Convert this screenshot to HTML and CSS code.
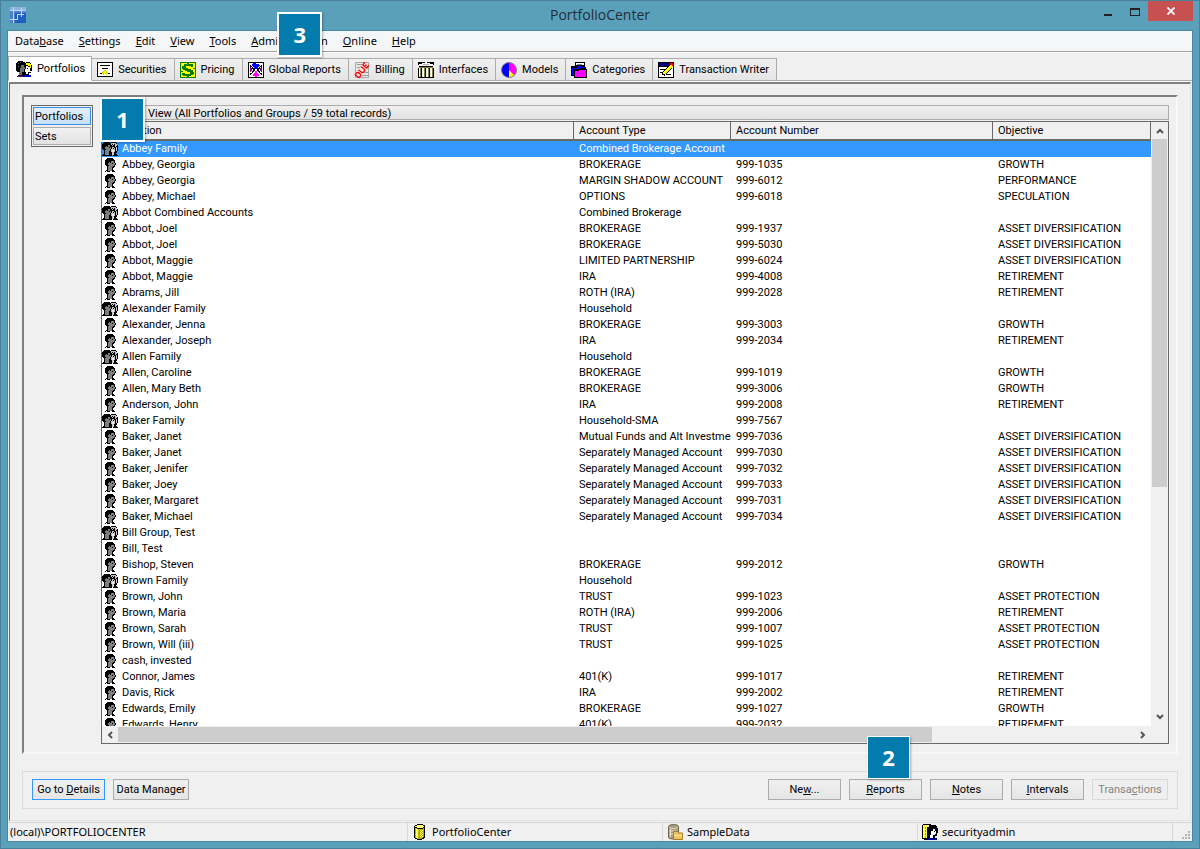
FILE: index.html
```html
<!DOCTYPE html>
<html lang="en">
<head>
<meta charset="utf-8">
<title>PortfolioCenter</title>
<link rel="stylesheet" href="styles.css">
</head>
<body>
<svg class="sprite" aria-hidden="true">
  <symbol id="person" viewBox="0 0 16 16">
    <path fill="#000" d="M5 1h6v1h1v1h1v3h1v2h-1v2h-1v1h-1v2h1v1h1v1H3v-1h1v-1h1V9H4V8H3V3h1V2h1z"/>
    <path fill="#808080" d="M9 4h3v2h1v2h-1v1h-1v1h-1v4H6V9h1V8H6V6h1V5h1v1h1z"/>
    <path fill="#000" d="M10 6h1v1h-1z"/>
    <path fill="#fff" d="M4 14h1v1H4zM8 14h2v1H8z"/>
  </symbol>
  <symbol id="group" viewBox="0 0 16 16">
    <path fill="#000" d="M2 1h6v1h1V1h5v1h1v2h1v6h-1v2h-1v1h1v1h1v1h-5v-1h-1v1H0v-1h1v-1h1V9H1V8H0V3h1V2h1z"/>
    <path fill="#808080" d="M6 4h2v2h1v2H8v2H7v4H3V9h1V8H3V6h1V5h1v1h1z"/>
    <path fill="#000" d="M7 6h1v1H7z"/>
    <path fill="#c8c8c8" d="M9 2h5v1h1v7h-1V6h-1V4h-2v1h-1V4H9zM10 6h2v1h1v4h-1v3h-2v-3H9V8h1z"/>
    <path fill="#000" d="M11 7h1v1h-1zM10 3h1v1h-1zM12 3h1v1h-1zM14 5h1v1h-1z"/>
    <path fill="#e8e8e8" d="M10 9h2v2h-2z"/>
  </symbol>
  <symbol id="cylinder" viewBox="0 0 12 16">
    <path fill="#000" d="M3 0h6v1h2v13h-1v1H8v1H3v-1H1v-1H0V2h1V1h2z"/>
    <path fill="#ffff80" d="M3 1h6v1h1v1H9v1H3V3H1V2h2z"/>
    <path fill="#b8b000" d="M1 4h2v1h6V4h1v9H9v1H8v1H3v-1H1z"/>
    <path fill="#ffff60" d="M2 5h2v9H2z"/>
    <path fill="#ffff60" d="M6 6h1v1H6zM8 6h1v1H8zM7 7h1v1H7zM6 8h1v1H6zM8 8h1v1H8zM7 9h1v1H7zM6 10h1v1H6zM8 10h1v1H8zM7 11h1v1H7zM6 12h1v1H6zM8 12h1v1H8z"/>
  </symbol>
</svg>

<div class="window">
  <header class="titlebar">
    <svg class="app-logo" viewBox="0 0 16 16" shape-rendering="crispEdges">
      <path fill="#8fb3dc" d="M0 0h16v16H0z"/><path fill="#4a80cc" d="M0 4h16v12H0z"/><path fill="#1f5fc0" d="M5 6h11v10H5z"/>
      <path fill="none" stroke="#c3d8f0" d="M0 3.500h16M3.500 0v16M0 12.500h8M7.500 13V7.500h6M11.500 1v9"/>
    </svg>
    <h1 class="title">PortfolioCenter</h1>
    <div class="controls">
      <button class="ctl" aria-label="Minimize"><svg width="10" height="12" shape-rendering="crispEdges"><path fill="#222" d="M1 9h8v2H1z"/></svg></button>
      <button class="ctl" aria-label="Maximize"><svg width="10" height="12" shape-rendering="crispEdges"><path fill="#222" fill-rule="evenodd" d="M0 3h10v8H0zM1 5v5h8V5z"/></svg></button>
      <button class="ctl close" aria-label="Close"><svg width="8" height="8" viewBox="0 0 8 7"><path stroke="#fff" stroke-width="1.800" d="M.5 0l7 7M7.500 0l-7 7"/></svg></button>
    </div>
  </header>

  <div class="client">
    <nav class="menubar">
      <button>Data<u>b</u>ase</button><button><u>S</u>ettings</button><button><u>E</u>dit</button><button><u>V</u>iew</button><button><u>T</u>ools</button>
      <span class="anchor"><button><u>A</u>dministration</button><b class="callout c3">3</b></span>
      <button><u>O</u>nline</button><button><u>H</u>elp</button>
    </nav>

    <div class="tabs" role="tablist">
      <button class="tab active" role="tab" aria-selected="true"><svg viewBox="0 0 16 16" shape-rendering="crispEdges">
        <path d="M2 0h5v1h2v1h1V1h4v1h1v2h1v6h-1v2h-2v2h2v2H1v-1h1v-1h1v-3H1v-1H0V2h1V1h1z"/><path fill="#707070" d="M5 4h3v2h1v2H8v3H6v3H3v-3h1V7h1zM2 2h1v1H2zM4 1h1v1H4zM2 5h1v1H2z"/>
        <path fill="#ffff00" d="M10 2h4v1h1v4h-1V5h-2V4h-2z"/><path fill="#fff" d="M10 5h2v1h2v4h1v1h-3v2h-2v-2H9V8h1z"/><path d="M11 7h1v1h-1z"/><path fill="#800080" d="M1 15h6v1H1z"/><path fill="#0000c0" d="M8 14h7v2H8z"/></svg>Portfolios</button>
      <button class="tab" role="tab"><svg viewBox="0 0 16 16" shape-rendering="crispEdges"><path d="M0 0h16v15H0z"/><path fill="#fff" d="M1 1h14v13H1z"/><path d="M3 3h10v1H3zM5 6h6v1H5zM3 11h3v1H3zM10 11h3v1h-3z"/><path fill="#d8d800" d="M7 8h2v1h1v1h1v2h-1v1H9v-1H7v1H6v-1H5v-2h1V9h1z"/><path fill="#ff0" d="M7 9h2v3H7z"/></svg>Securities</button>
      <button class="tab" role="tab"><svg viewBox="0 0 16 16" shape-rendering="crispEdges"><path fill="#008000" d="M0 0h16v16H0z"/><path fill="#ff0" d="M1 1h14v14H1z"/><path fill="#008000" d="M4 2h3V1h2v1h4v3h-2V4H6v2h2v1h3v1h2v2h1v2h-1v1h-2v1H9v1H7v-1H3v-1H2v-2h3v1h5v-2H7V9H5V8H3V7H2V4h2zM1 9h2v1H1zM13 6h2v1h-2z"/></svg>Pricing</button>
      <button class="tab" role="tab"><svg viewBox="0 0 16 16" shape-rendering="crispEdges"><path d="M0 0h16v16H0z"/><path fill="#fff" d="M1 1h14v14H1z"/><path fill="#00f" d="M5 1h3v1h3v1h1v1h-1v1h-1v2H6V5H5V4H4V2h1z"/><path fill="#f0f" d="M7 9h2v2h1v1h1v2H9v1H7v-1H5v-2h1v-1h1z"/><path d="M2 3h1v1h1v1h1v1h1v1h1v2H6v1H5v1H4v1H3v1H2v-2h2V9h1V7H4V5H2zM14 3h-1v1h-1v1h-1v1h-1v1H9v2h1v1h1v1h1v1h1v1h1v-2h-2V9h-1V7h1V5h2z"/><path fill="#800080" d="M2 5h1v1h1v3H3v1H2zM14 5h-1v1h-1v3h1v1h1z"/></svg>Global Reports</button>
      <button class="tab" role="tab"><svg viewBox="0 0 16 16"><path fill="#e8e8e8" stroke="#aaa" d="M1.500 .5h13v15h-13z"/><path stroke="#999" d="M3 2.500h5M10 10.500h4M8 13.500h6M3 5.500h3"/><g fill="none" stroke="#f00" stroke-width="1.300" transform="rotate(-52 8 8)"><path d="M0 5.500v5h2c2.500 0 2.500-5 0-5zM6 5v4c0 2 4 2 4 0V5M16 5.500h-3.500v5H16M12.500 8H15"/></g></svg>Billing</button>
      <button class="tab" role="tab"><svg viewBox="0 0 16 16" shape-rendering="crispEdges"><path d="M0 0h16v3H0zM1 4h14v1H1zM0 6h4v9H0zM5 6h3v9H5zM9 6h3v9H9zM13 6h3v9h-3zM0 15h16v1H0z"/><path fill="#fff" d="M7 0h2v1h3v1h3v1H1V2h3V1h3zM1 6h1v9H1zM5 6h1v9H5zM9 6h1v9H9zM13 6h1v9h-1z"/><path fill="#b0b0b0" d="M5 2h6v1H5z"/><path fill="#808040" d="M2 6h1v9H2zM6 6h1v9H6zM10 6h1v9h-1zM14 6h1v9h-1zM1 5h14v1H1z"/></svg>Interfaces</button>
      <button class="tab" role="tab"><svg viewBox="0 0 16 16"><circle cx="8" cy="8" r="7.500" fill="#f0f"/><path fill="#00f" d="M8 .5a7.500 7.500 0 0 0 0 15z"/><path fill="#ff0" d="M8 8l5.300 5.300A7.500 7.500 0 0 1 8 15.500z"/><circle cx="8" cy="8" r="7.500" fill="none" stroke="#808080"/></svg>Models</button>
      <button class="tab" role="tab"><svg viewBox="0 0 16 16" shape-rendering="crispEdges"><path d="M4 0h9l1 1v4h1v2h1v9H3v-2H0V4h4z"/><path fill="#fff" d="M5 1h8v2H5z"/><path fill="#888" d="M6 2h5v1H6z"/><path fill="#00f" d="M1 6h5V5h1V4h3v1h4v1H9v1H3v6H1z"/><path fill="#f0f" d="M4 9h4V8h7v7H4z"/></svg>Categories</button>
      <button class="tab" role="tab"><svg viewBox="0 0 16 16" shape-rendering="crispEdges"><path d="M0 0h16v16H0z"/><path fill="#fff" d="M1 5h14v10H1z"/><path fill="#000080" d="M1 1h14v3H1z"/><path d="M2 7h5v1H2zM2 10h3v1H2zM8 12h5v1H8z"/><path stroke="#000" stroke-width="4" d="M5 13L14 3"/><path stroke="#ff0" stroke-width="3" d="M6 12L14 3"/><path fill="#f00" d="M12 1h3v3h-1V3h-2z"/></svg>Transaction Writer</button>
    </div>

    <main class="page">
      <section class="well">
        <nav class="side"><button class="on">Portfolios</button><button>Sets</button></nav>
        <div class="browser">
          <b class="callout c1">1</b>
          <h2 class="view-title">View (All Portfolios and Groups / 59 total records)</h2>
          <div class="list">
            <div class="rows">
              <table>
                <colgroup><col><col class="w-type"><col class="w-num"><col class="w-obj"></colgroup>
                <thead><tr><th>Description</th><th>Account Type</th><th>Account Number</th><th>Objective</th></tr></thead>
                <tbody>
<tr class="sel"><td><svg><use href="#group"/></svg>Abbey Family</td><td>Combined Brokerage Account</td><td></td><td></td></tr>
<tr><td><svg><use href="#person"/></svg>Abbey, Georgia</td><td>BROKERAGE</td><td>999-1035</td><td>GROWTH</td></tr>
<tr><td><svg><use href="#person"/></svg>Abbey, Georgia</td><td>MARGIN SHADOW ACCOUNT</td><td>999-6012</td><td>PERFORMANCE</td></tr>
<tr><td><svg><use href="#person"/></svg>Abbey, Michael</td><td>OPTIONS</td><td>999-6018</td><td>SPECULATION</td></tr>
<tr><td><svg><use href="#group"/></svg>Abbot Combined Accounts</td><td>Combined Brokerage</td><td></td><td></td></tr>
<tr><td><svg><use href="#person"/></svg>Abbot, Joel</td><td>BROKERAGE</td><td>999-1937</td><td>ASSET DIVERSIFICATION</td></tr>
<tr><td><svg><use href="#person"/></svg>Abbot, Joel</td><td>BROKERAGE</td><td>999-5030</td><td>ASSET DIVERSIFICATION</td></tr>
<tr><td><svg><use href="#person"/></svg>Abbot, Maggie</td><td>LIMITED PARTNERSHIP</td><td>999-6024</td><td>ASSET DIVERSIFICATION</td></tr>
<tr><td><svg><use href="#person"/></svg>Abbot, Maggie</td><td>IRA</td><td>999-4008</td><td>RETIREMENT</td></tr>
<tr><td><svg><use href="#person"/></svg>Abrams, Jill</td><td>ROTH (IRA)</td><td>999-2028</td><td>RETIREMENT</td></tr>
<tr><td><svg><use href="#group"/></svg>Alexander Family</td><td>Household</td><td></td><td></td></tr>
<tr><td><svg><use href="#person"/></svg>Alexander, Jenna</td><td>BROKERAGE</td><td>999-3003</td><td>GROWTH</td></tr>
<tr><td><svg><use href="#person"/></svg>Alexander, Joseph</td><td>IRA</td><td>999-2034</td><td>RETIREMENT</td></tr>
<tr><td><svg><use href="#group"/></svg>Allen Family</td><td>Household</td><td></td><td></td></tr>
<tr><td><svg><use href="#person"/></svg>Allen, Caroline</td><td>BROKERAGE</td><td>999-1019</td><td>GROWTH</td></tr>
<tr><td><svg><use href="#person"/></svg>Allen, Mary Beth</td><td>BROKERAGE</td><td>999-3006</td><td>GROWTH</td></tr>
<tr><td><svg><use href="#person"/></svg>Anderson, John</td><td>IRA</td><td>999-2008</td><td>RETIREMENT</td></tr>
<tr><td><svg><use href="#group"/></svg>Baker Family</td><td>Household-SMA</td><td>999-7567</td><td></td></tr>
<tr><td><svg><use href="#person"/></svg>Baker, Janet</td><td>Mutual Funds and Alt Investme</td><td>999-7036</td><td>ASSET DIVERSIFICATION</td></tr>
<tr><td><svg><use href="#person"/></svg>Baker, Janet</td><td>Separately Managed Account</td><td>999-7030</td><td>ASSET DIVERSIFICATION</td></tr>
<tr><td><svg><use href="#person"/></svg>Baker, Jenifer</td><td>Separately Managed Account</td><td>999-7032</td><td>ASSET DIVERSIFICATION</td></tr>
<tr><td><svg><use href="#person"/></svg>Baker, Joey</td><td>Separately Managed Account</td><td>999-7033</td><td>ASSET DIVERSIFICATION</td></tr>
<tr><td><svg><use href="#person"/></svg>Baker, Margaret</td><td>Separately Managed Account</td><td>999-7031</td><td>ASSET DIVERSIFICATION</td></tr>
<tr><td><svg><use href="#person"/></svg>Baker, Michael</td><td>Separately Managed Account</td><td>999-7034</td><td>ASSET DIVERSIFICATION</td></tr>
<tr><td><svg><use href="#group"/></svg>Bill Group, Test</td><td></td><td></td><td></td></tr>
<tr><td><svg><use href="#person"/></svg>Bill, Test</td><td></td><td></td><td></td></tr>
<tr><td><svg><use href="#person"/></svg>Bishop, Steven</td><td>BROKERAGE</td><td>999-2012</td><td>GROWTH</td></tr>
<tr><td><svg><use href="#group"/></svg>Brown Family</td><td>Household</td><td></td><td></td></tr>
<tr><td><svg><use href="#person"/></svg>Brown, John</td><td>TRUST</td><td>999-1023</td><td>ASSET PROTECTION</td></tr>
<tr><td><svg><use href="#person"/></svg>Brown, Maria</td><td>ROTH (IRA)</td><td>999-2006</td><td>RETIREMENT</td></tr>
<tr><td><svg><use href="#person"/></svg>Brown, Sarah</td><td>TRUST</td><td>999-1007</td><td>ASSET PROTECTION</td></tr>
<tr><td><svg><use href="#person"/></svg>Brown, Will (iii)</td><td>TRUST</td><td>999-1025</td><td>ASSET PROTECTION</td></tr>
<tr><td><svg><use href="#person"/></svg>cash, invested</td><td></td><td></td><td></td></tr>
<tr><td><svg><use href="#person"/></svg>Connor, James</td><td>401(K)</td><td>999-1017</td><td>RETIREMENT</td></tr>
<tr><td><svg><use href="#person"/></svg>Davis, Rick</td><td>IRA</td><td>999-2002</td><td>RETIREMENT</td></tr>
<tr><td><svg><use href="#person"/></svg>Edwards, Emily</td><td>BROKERAGE</td><td>999-1027</td><td>GROWTH</td></tr>
<tr><td><svg><use href="#person"/></svg>Edwards, Henry</td><td>401(K)</td><td>999-2032</td><td>RETIREMENT</td></tr>
                </tbody>
              </table>
            </div>
            <div class="vbar">
              <svg viewBox="0 0 8 6"><path d="M1 5l3-3 3 3"/></svg>
              <div class="track"><div class="thumb"></div></div>
              <svg viewBox="0 0 8 6"><path d="M1 1l3 3 3-3"/></svg>
            </div>
            <div class="hbar">
              <svg viewBox="0 0 6 8"><path d="M5 1L2 4l3 3"/></svg>
              <div class="track"><div class="thumb"></div></div>
              <svg viewBox="0 0 6 8"><path d="M1 1l3 3-3 3"/></svg>
            </div>
          </div>
        </div>
      </section>

      <footer class="actions">
        <button class="btn default">Go to <u>D</u>etails</button>
        <button class="btn wide">Data Manager</button>
        <span class="spring"></span>
        <button class="btn">Ne<u>w</u>...</button>
        <span class="anchor"><button class="btn"><u>R</u>eports</button><b class="callout c2">2</b></span>
        <button class="btn"><u>N</u>otes</button>
        <button class="btn"><u>I</u>ntervals</button>
        <button class="btn wide" disabled>Transa<u>c</u>tions</button>
      </footer>
    </main>

    <div class="status">
      <div class="cell first">(local)\PORTFOLIOCENTER</div>
      <div class="cell"><svg class="cyl" viewBox="0 0 12 16" shape-rendering="crispEdges"><use href="#cylinder"/></svg>PortfolioCenter</div>
      <div class="cell"><svg viewBox="0 0 16 16"><path fill="#a8a080" stroke="#706850" d="M1.500 2.500c0-2.600 10-2.600 10 0v11c0 2-10 2-10 0z"/><path fill="none" stroke="#e4dfc8" d="M2 3c1 2 8 2 9 0M3.500 5v8M2 7h7M2 10h5"/><path fill="#f3c561" stroke="#a87b28" d="M6.500 9.500V7.500h4l1 1.500h4v6.500h-9z"/><path fill="#ffe49b" d="M7 11h8v1H7z"/></svg>SampleData</div>
      <div class="cell"><svg viewBox="0 0 16 16" shape-rendering="crispEdges"><path d="M1 0h8v1h5v1h1v2h1v5h-1v3h-2v2h2v2H2v-1H0V1h1z"/><path fill="#ffff50" d="M1 1h6v2H5v11H1z"/><path fill="#a0a000" d="M3 3h1v2H3zM3 6h1v2H3zM3 9h1v2H3zM3 12h1v2H3z"/><path fill="#fff" d="M9 7h2V5h2v2h1v3h-1v1h-2v3H8v-3h1z"/><path d="M12 7h1v1h-1z"/><path fill="#000090" d="M6 14h9v2H6z"/></svg>securityadmin</div>
      <svg class="grip" viewBox="0 0 10 10" shape-rendering="crispEdges"><path fill="#b4b4b4" d="M7 0h2v2H7zM4 3h2v2H4zM7 3h2v2H7zM1 6h2v2H1zM4 6h2v2H4zM7 6h2v2H7z"/></svg>
    </div>
  </div>
</div>
</body>
</html>
```
FILE: styles.css
```css
* { box-sizing: border-box; }
body { margin: 0; font: 11px/16px Roboto, "Liberation Sans", Arial, sans-serif; color: #000; }
button { font: inherit; color: inherit; border: 0; padding: 0; margin: 0; background: none; white-space: nowrap; }
h1, h2 { margin: 0; font-weight: normal; }
.sprite { display: none; }

.window { height: 100vh; display: flex; flex-direction: column; background: #5ba0ba; border: 1px solid #48809a; padding: 0 6px 6px; }

/* title bar */
.titlebar { height: 29px; flex: none; display: grid; grid-template-columns: 1fr auto 1fr; }
.app-logo { width: 16px; height: 16px; margin: 6px 0 0 3px; }
.title { font: 14px/28px "Open Sans", sans-serif; color: #1f2f38; }
.controls { display: flex; justify-content: flex-end; align-items: flex-start; }
.ctl { width: 27px; height: 20px; display: flex; align-items: center; justify-content: center; }
.close { width: 45px; background: #c75050; }

.client { flex: 1; min-height: 0; display: flex; flex-direction: column; background: #f0f0f0; border: 1px solid #4a89a2; }

/* menu */
.menubar { flex: none; height: 21px; display: flex; gap: 15px; padding: 0 7px; background: #f5f6f7; border-bottom: 1px solid #a0a0a0; font: 11px/20px "Noto Sans", sans-serif; }
.menubar button { display: block; }
.anchor { position: relative; display: flex; }

/* tabs */
.tabs { flex: none; height: 30px; padding-top: 4px; border-top: 1px solid #fff; border-bottom: 1px solid #fff; display: flex; align-items: flex-end; background: linear-gradient(#acacac, #acacac) bottom / 100% 1px no-repeat; }
.tab { height: 23px; display: flex; align-items: center; gap: 5px; padding: 0 7px 0 5px; background: linear-gradient(#f0f0f0, #e5e5e5); border: 1px solid #acacac; border-left-width: 0; }
.tab svg { width: 16px; height: 16px; flex: none; }
.tab.active { height: 25px; padding: 0 6px 0 7px; border-left-width: 1px; border-bottom-color: #fff; background: #fff; }

/* page body */
.page { flex: 1; min-height: 0; display: flex; flex-direction: column; gap: 17px; margin: 0 1px 1px; padding: 11px 12px 11px 12px; border: 1px solid #e3e3e3; border-top: 2px solid #808080; border-left: 1px solid #696969; }
.well { flex: 1; min-height: 0; display: flex; align-items: flex-start; gap: 8px; padding: 8px 7px 8px 7px; border: 2px solid #f8f8f8; border-top-color: #808080; border-left-color: #808080; }
.side { width: 62px; flex: none; display: flex; flex-direction: column; gap: 2px; padding: 1px; border: 1px solid #696969; }
.side button { height: 18px; text-align: left; padding: 1px 0 0 1px; border: 1px solid #acacac; background: linear-gradient(#f2f2f2, #e2e2e2); }
.side .on { border-color: #3c8fe0; background: linear-gradient(#e3f0fc, #c6e0fb); }

.browser { flex: 1; min-width: 0; align-self: stretch; display: flex; flex-direction: column; gap: 1px; position: relative; }
.view-title { height: 15px; flex: none; font-size: 11px; line-height: 15px; padding-left: 46px; border: 1px solid #acacac; background: linear-gradient(#f0f0f0, #e2e2e2); white-space: nowrap; }
.list { flex: 1; min-height: 0; display: grid; grid-template: minmax(0, 1fr) 17px / minmax(0, 1fr) 17px; border: 1px solid #696969; background: #f0f0f0; }
.rows { overflow: hidden; background: #fff; }
table { width: 100%; table-layout: fixed; border-collapse: separate; border-spacing: 0; }
.w-type { width: 157px; }
.w-num { width: 262px; }
.w-obj { width: 158px; }
th, td { padding: 0 0 0 5px; text-align: left; font-weight: normal; white-space: nowrap; overflow: hidden; }
th { height: 19px; padding-top: 1px; line-height: 16px; background: #f0f0f0; border-right: 1px solid #696969; border-bottom: 2px solid #696969; }
td { height: 16px; line-height: 16px; vertical-align: top; }
td:first-child, th:first-child { padding-left: 0; }
th:first-child { padding-left: 4px; }
td svg { width: 16px; height: 16px; margin-right: 4px; vertical-align: top; shape-rendering: crispEdges; }
.sel td { background: #3399ff; color: #fff; }

.vbar, .hbar { display: flex; align-items: center; background: #f0f0f0; }
.vbar { flex-direction: column; justify-content: space-between; padding: 6px 0; gap: 5px; }
.hbar { padding: 0 5px; gap: 5px; justify-content: space-between; }
.vbar > svg { width: 8px; height: 6px; }
.hbar > svg { width: 6px; height: 8px; }
.vbar path, .hbar path { fill: none; stroke: #555; stroke-width: 2; }
.track { flex: 1; }
.vbar .track { width: 15px; }
.hbar .track { height: 15px; }
.thumb { background: #cdcdcd; }
.vbar .thumb { height: 61%; }
.hbar .thumb { width: 80%; height: 100%; }

/* bottom buttons */
.actions { flex: none; display: flex; gap: 8px; align-items: center; height: 38px; padding: 0 9px 2px; border: 1px solid #dcdcdc; }
.spring { flex: 1; }
.btn { width: 73px; height: 21px; padding-top: 1px; border: 1px solid #acacac; background: linear-gradient(#f0f0f0, #e5e5e5); }
.wide { width: 76px; }
.default { border-color: #3399ff; }
.btn:disabled { color: #838383; border-color: #d9d9d9; background: #efefef; }

/* status bar */
.status { flex: none; height: 19px; display: flex; border-top: 1px solid #d7d7d7; font: 11px/18px "Noto Sans", sans-serif; }
.cell { flex: 0 0 255px; display: flex; align-items: center; gap: 4px; padding-left: 4px; border-right: 1px solid #d7d7d7; white-space: nowrap; }
.first { flex: 1; padding-left: 2px; }
.cell svg { width: 16px; height: 16px; flex: none; }
.cell .cyl { width: 12px; margin: 0 2px; }
.grip { width: 10px; height: 10px; margin: 8px 1px 0 8px; }

/* numbered callouts */
.callout { position: absolute; z-index: 2; width: 45px; height: 45px; border: 2px solid #fff; background: #047bad; color: #fff; font: bold 22px/41px "Open Sans", sans-serif; text-align: center; box-shadow: 1px 1px 2px rgba(0, 0, 0, .3); }
.c1 { left: -1px; top: -8px; }
.c2 { left: 18px; bottom: 21px; width: 43px; height: 43px; border-width: 1px; }
.c3 { left: 26px; top: -19px; }
```
